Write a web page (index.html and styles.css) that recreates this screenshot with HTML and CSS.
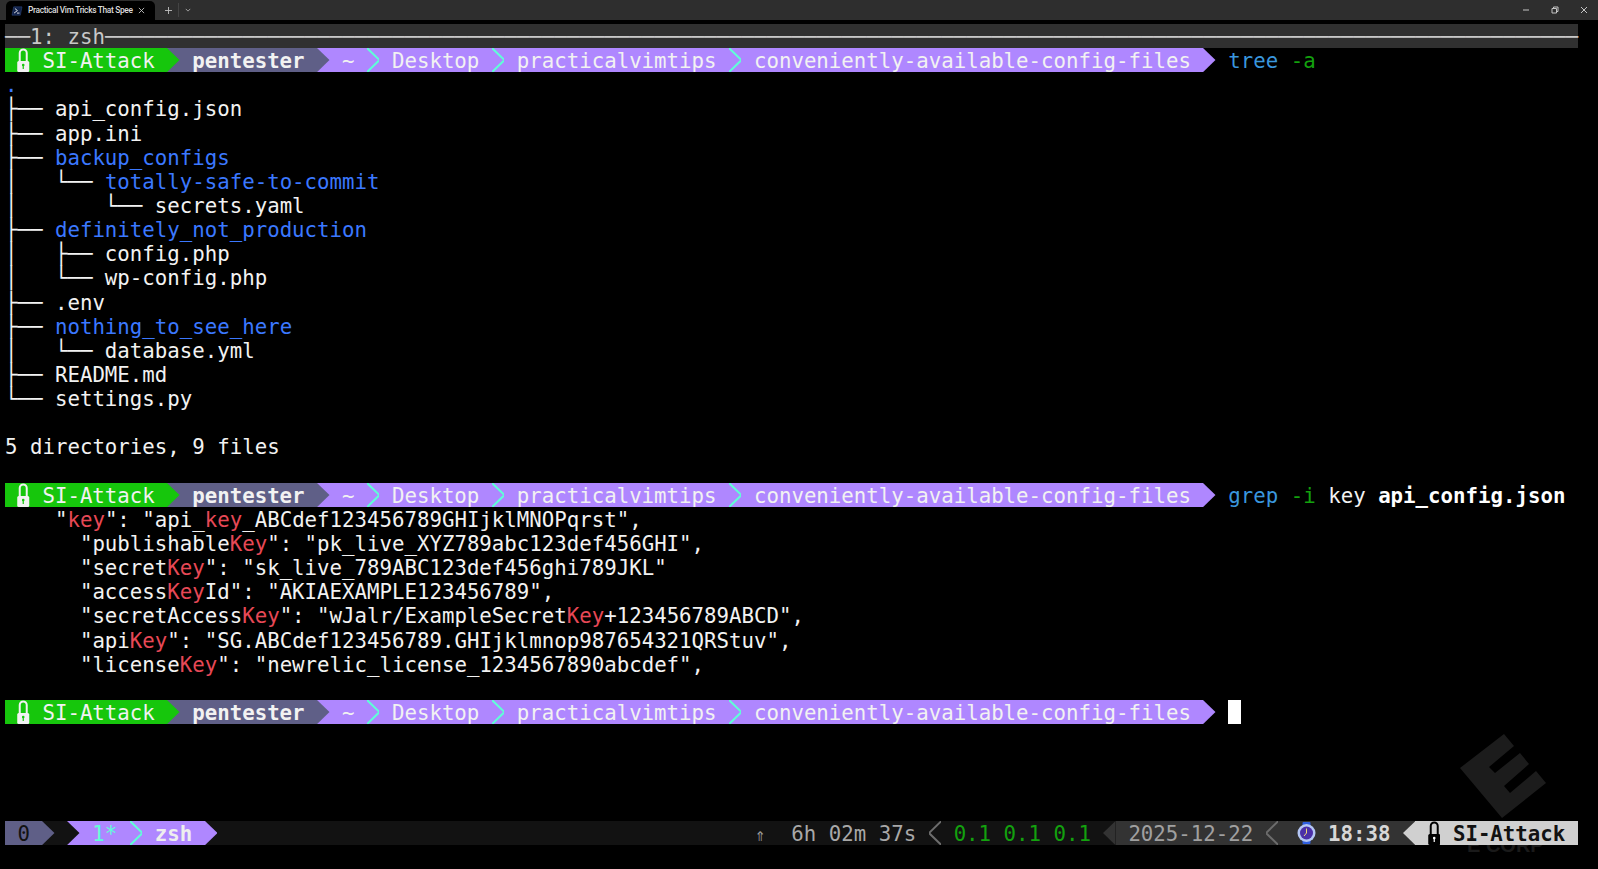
FILE: index.html
```html
<!DOCTYPE html>
<html lang="en">
<head>
<meta charset="utf-8">
<title>Practical Vim Tricks That Spee</title>
<link rel="stylesheet" href="styles.css">
</head>
<body>
<header class="tabbar">
  <div class="tab">
    <svg class="tab-icon" viewBox="0 0 14 12"><path class="ps-bg" d="M3 1h10l-2 10H1z"/><path class="ps-fg" d="M4.500 3l3 2.500-4 3M7 8.500h3"/></svg>
    <span class="tab-title">Practical Vim Tricks That Spee</span>
    <svg class="tab-close" viewBox="0 0 8 8"><path d="M1 1l6 6M7 1L1 7"/></svg>
  </div>
  <svg class="tab-new" viewBox="0 0 8 8"><path d="M4 0v8M0 4h8"/></svg>
  <span class="tab-sep"></span>
  <svg class="tab-menu" viewBox="0 0 8 5"><path d="M1 1l3 3 3-3"/></svg>
  <div class="win-controls">
    <svg class="win-btn" viewBox="0 0 8 8"><path d="M1 4h6"/></svg>
    <svg class="win-btn" viewBox="0 0 8 8"><path d="M1 2.500h4.500V7H1zM2.500 2.500V1H7v4.500H5.500"/></svg>
    <svg class="win-btn" viewBox="0 0 8 8"><path d="M1 1l6 6M7 1L1 7"/></svg>
  </div>
</header>

<svg class="watermark" viewBox="0 0 87 87"><polygon points="44,1 54,13 29,34 35,40 60,20 69,31 44,53 50,60 76,38 86,50 42,85 0,35"/></svg>
<div class="watermark-text">E CORP</div>

<main class="term">
  <div class="row title">──<span>1: zsh</span>──────────────────────────────────────────────────────────────────────────────────────────────────────────────────────</div>

  <div class="row">
    <span class="seg green"> <svg class="lock" viewBox="0 0 12 24"><path class="lock-shackle" d="M2.500 14V5a3.500 3.500 0 0 1 7 0v9"/><rect class="lock-body" y="13" width="12" height="11" rx="1.500"/><circle class="lock-dot" cx="6" cy="17" r="1.300"/><path class="lock-hole" d="M6 17v4"/></svg> SI-Attack </span>
    <svg class="arr on-grey" viewBox="0 0 12 24" preserveAspectRatio="none"><polygon class="f-green" points="0,0 12,12 0,24"/></svg>
    <span class="seg grey strong"> pentester </span>
    <svg class="arr on-purple" viewBox="0 0 12 24" preserveAspectRatio="none"><polygon class="f-grey" points="0,0 12,12 0,24"/></svg>
    <span class="seg purple"> ~ </span>
    <svg class="arr on-purple" viewBox="0 0 12 24" preserveAspectRatio="none"><polyline class="s-cyan" points="0,0 12,12 0,24"/></svg>
    <span class="seg purple"> Desktop </span>
    <svg class="arr on-purple" viewBox="0 0 12 24" preserveAspectRatio="none"><polyline class="s-cyan" points="0,0 12,12 0,24"/></svg>
    <span class="seg purple"> practicalvimtips </span>
    <svg class="arr on-purple" viewBox="0 0 12 24" preserveAspectRatio="none"><polyline class="s-cyan" points="0,0 12,12 0,24"/></svg>
    <span class="seg purple"> conveniently-available-config-files </span>
    <svg class="arr" viewBox="0 0 12 24" preserveAspectRatio="none"><polygon class="f-purple" points="0,0 12,12 0,24"/></svg>
    <span> <span class="cmd">tree</span> <span class="flag">-a</span></span>
  </div>

  <div class="row dir">.</div>
  <div class="row">├── api_config.json</div>
  <div class="row">├── app.ini</div>
  <div class="row">├── <span class="dir">backup_configs</span></div>
  <div class="row">│   └── <span class="dir">totally-safe-to-commit</span></div>
  <div class="row">│       └── secrets.yaml</div>
  <div class="row">├── <span class="dir">definitely_not_production</span></div>
  <div class="row">│   ├── config.php</div>
  <div class="row">│   └── wp-config.php</div>
  <div class="row">├── .env</div>
  <div class="row">├── <span class="dir">nothing_to_see_here</span></div>
  <div class="row">│   └── database.yml</div>
  <div class="row">├── README.md</div>
  <div class="row">└── settings.py</div>
  <div class="row"></div>
  <div class="row">5 directories, 9 files</div>
  <div class="row"></div>

  <div class="row">
    <span class="seg green"> <svg class="lock" viewBox="0 0 12 24"><path class="lock-shackle" d="M2.500 14V5a3.500 3.500 0 0 1 7 0v9"/><rect class="lock-body" y="13" width="12" height="11" rx="1.500"/><circle class="lock-dot" cx="6" cy="17" r="1.300"/><path class="lock-hole" d="M6 17v4"/></svg> SI-Attack </span>
    <svg class="arr on-grey" viewBox="0 0 12 24" preserveAspectRatio="none"><polygon class="f-green" points="0,0 12,12 0,24"/></svg>
    <span class="seg grey strong"> pentester </span>
    <svg class="arr on-purple" viewBox="0 0 12 24" preserveAspectRatio="none"><polygon class="f-grey" points="0,0 12,12 0,24"/></svg>
    <span class="seg purple"> ~ </span>
    <svg class="arr on-purple" viewBox="0 0 12 24" preserveAspectRatio="none"><polyline class="s-cyan" points="0,0 12,12 0,24"/></svg>
    <span class="seg purple"> Desktop </span>
    <svg class="arr on-purple" viewBox="0 0 12 24" preserveAspectRatio="none"><polyline class="s-cyan" points="0,0 12,12 0,24"/></svg>
    <span class="seg purple"> practicalvimtips </span>
    <svg class="arr on-purple" viewBox="0 0 12 24" preserveAspectRatio="none"><polyline class="s-cyan" points="0,0 12,12 0,24"/></svg>
    <span class="seg purple"> conveniently-available-config-files </span>
    <svg class="arr" viewBox="0 0 12 24" preserveAspectRatio="none"><polygon class="f-purple" points="0,0 12,12 0,24"/></svg>
    <span> <span class="cmd">grep</span> <span class="flag">-i</span> key <b class="file">api_config.json</b></span>
  </div>

  <div class="row">    "<span class="hit">key</span>": "api_<span class="hit">key</span>_ABCdef123456789GHIjklMNOPqrst",</div>
  <div class="row">      "publishable<span class="hit">Key</span>": "pk_live_XYZ789abc123def456GHI",</div>
  <div class="row">      "secret<span class="hit">Key</span>": "sk_live_789ABC123def456ghi789JKL"</div>
  <div class="row">      "access<span class="hit">Key</span>Id": "AKIAEXAMPLE123456789",</div>
  <div class="row">      "secretAccess<span class="hit">Key</span>": "wJalr/ExampleSecret<span class="hit">Key</span>+123456789ABCD",</div>
  <div class="row">      "api<span class="hit">Key</span>": "SG.ABCdef123456789.GHIjklmnop987654321QRStuv",</div>
  <div class="row">      "license<span class="hit">Key</span>": "newrelic_license_1234567890abcdef",</div>
  <div class="row"></div>

  <div class="row">
    <span class="seg green"> <svg class="lock" viewBox="0 0 12 24"><path class="lock-shackle" d="M2.500 14V5a3.500 3.500 0 0 1 7 0v9"/><rect class="lock-body" y="13" width="12" height="11" rx="1.500"/><circle class="lock-dot" cx="6" cy="17" r="1.300"/><path class="lock-hole" d="M6 17v4"/></svg> SI-Attack </span>
    <svg class="arr on-grey" viewBox="0 0 12 24" preserveAspectRatio="none"><polygon class="f-green" points="0,0 12,12 0,24"/></svg>
    <span class="seg grey strong"> pentester </span>
    <svg class="arr on-purple" viewBox="0 0 12 24" preserveAspectRatio="none"><polygon class="f-grey" points="0,0 12,12 0,24"/></svg>
    <span class="seg purple"> ~ </span>
    <svg class="arr on-purple" viewBox="0 0 12 24" preserveAspectRatio="none"><polyline class="s-cyan" points="0,0 12,12 0,24"/></svg>
    <span class="seg purple"> Desktop </span>
    <svg class="arr on-purple" viewBox="0 0 12 24" preserveAspectRatio="none"><polyline class="s-cyan" points="0,0 12,12 0,24"/></svg>
    <span class="seg purple"> practicalvimtips </span>
    <svg class="arr on-purple" viewBox="0 0 12 24" preserveAspectRatio="none"><polyline class="s-cyan" points="0,0 12,12 0,24"/></svg>
    <span class="seg purple"> conveniently-available-config-files </span>
    <svg class="arr" viewBox="0 0 12 24" preserveAspectRatio="none"><polygon class="f-purple" points="0,0 12,12 0,24"/></svg>
    <span> </span><span class="cursor"> </span>
  </div>

  <div class="row"></div>
  <div class="row"></div>
  <div class="row"></div>
  <div class="row"></div>

  <div class="row status">
    <span class="seg grey st-zero"> 0 </span>
    <svg class="arr on-dark" viewBox="0 0 12 24" preserveAspectRatio="none"><polygon class="f-grey" points="0,0 12,12 0,24"/></svg>
    <span class="seg"> </span>
    <svg class="arr on-purple" viewBox="0 0 12 24" preserveAspectRatio="none"><polygon class="f-dark" points="0,0 12,12 0,24"/></svg>
    <span class="seg purple st-cur"> 1* </span>
    <svg class="arr on-purple" viewBox="0 0 12 24" preserveAspectRatio="none"><polyline class="s-cyan" points="0,0 12,12 0,24"/></svg>
    <span class="seg purple strong"> zsh </span>
    <svg class="arr on-dark" viewBox="0 0 12 24" preserveAspectRatio="none"><polygon class="f-purple" points="0,0 12,12 0,24"/></svg>
    <span class="st-gap"></span>
    <span class="st-up"><span class="st-up-glyph">⇑</span></span>
    <span class="seg st-uptime">  6h 02m 37s </span>
    <svg class="arr on-dark" viewBox="0 0 12 24" preserveAspectRatio="none"><polyline class="s-grey" points="12,0 0,12 12,24"/></svg>
    <span class="seg st-load"> 0.1 0.1 0.1 </span>
    <svg class="arr on-dark" viewBox="0 0 12 24" preserveAspectRatio="none"><polygon class="f-mid" points="12,0 0,12 12,24"/></svg>
    <span class="seg mid st-date"> 2025-12-22 </span>
    <svg class="arr on-mid" viewBox="0 0 12 24" preserveAspectRatio="none"><polyline class="s-grey" points="12,0 0,12 12,24"/></svg>
    <span class="seg mid st-date"> </span>
    <span class="watch-cell"><svg class="watch" viewBox="0 0 19 24"><rect class="watch-band" x="5.500" y="1" width="8" height="22" rx="1"/><circle class="watch-case" cx="9.500" cy="12" r="9"/><circle class="watch-face" cx="9.500" cy="12" r="6.500"/><path class="watch-hand" d="M9.500 7.500V12L7 15"/></svg></span>
    <span class="seg mid st-time"> 18:38 </span>
    <svg class="arr on-mid" viewBox="0 0 12 24" preserveAspectRatio="none"><polygon class="f-light" points="12,0 0,12 12,24"/></svg>
    <span class="seg light"> <svg class="lock lock-dark" viewBox="0 0 12 24"><path class="lock-shackle" d="M2.500 14V5a3.500 3.500 0 0 1 7 0v9"/><rect class="lock-body" y="13" width="12" height="11" rx="1.500"/><circle class="lock-dot" cx="6" cy="17" r="1.300"/><path class="lock-hole" d="M6 17v4"/></svg> SI-Attack </span>
  </div>
</main>
</body>
</html>
```

FILE: styles.css
```css
* { box-sizing: border-box; }
html, body { margin: 0; height: 100%; }
body {
  background: #000;
  overflow: hidden;
  position: relative;
}

/* window chrome */
.tabbar {
  height: 20px;
  background: #2e2e2e;
  display: flex;
  align-items: center;
  padding-left: 6px;
}
.tab {
  width: 149px;
  height: 19px;
  align-self: flex-end;
  background: #000;
  border-radius: 5px 5px 0 0;
  display: flex;
  align-items: center;
  padding-left: 5px;
}
.tab-icon { width: 12px; height: 10px; flex: none; }
.ps-bg { fill: #12224a; stroke: #35508a; stroke-width: 0.6; }
.ps-fg { fill: none; stroke: #fff; stroke-width: 1; }
.tab-title {
  font: 500 8.4px/1.3 Roboto, sans-serif;
  letter-spacing: -0.33px;
  color: #dcdcdc;
  margin-left: 5px;
  width: 105px;
  white-space: nowrap;
}
.tab-close { width: 7px; height: 7px; margin-left: 5px; }
.tab-new { width: 7px; height: 7px; margin-left: 10px; }
.tab-sep { width: 1px; height: 14px; background: #444; margin-left: 6px; }
.tab-menu { width: 6px; height: 4px; margin-left: 6px; }
.tab-close path, .tab-new path, .tab-menu path, .win-btn path {
  fill: none;
  stroke: #c4c4c4;
  stroke-width: 1;
}
.win-controls {
  margin-left: auto;
  margin-right: 10px;
  display: flex;
  gap: 21px;
}
.win-btn { width: 8px; height: 8px; }

/* terminal */
.term {
  position: relative;
  margin: 4px 20px 0 5px;
  font-family: "DejaVu Sans Mono", monospace;
  font-size: 20.74px;
  color: #f2f2f2;
  z-index: 1;
}
.row {
  display: flex;
  height: 24.15px;
  line-height: 26.15px;
  white-space: pre;
}
.row > * { flex: none; }
.title {
  background: #303030;
  color: #c8c8c8;
}
.seg { display: block; }
.green { background: #16c60c; }
.grey { background: #5f5f87; }
.purple { background: #af87ff; }
.mid { background: #333; }
.light { background: #d0d0d0; color: #121212; font-weight: 700; }
.strong { font-weight: 700; }
.dir { color: #3b78ff; }
.cmd { color: #3a96dd; }
.flag { color: #13a10e; }
.file { font-weight: 700; color: #fff; }
.hit { color: #e74856; }
.cursor { background: #fff; }

/* powerline arrows */
.arr { width: 1ch; height: 100%; display: block; }
.on-grey { background: #5f5f87; }
.on-purple { background: #af87ff; }
.on-dark { background: #121212; }
.on-mid { background: #333; }
.f-green { fill: #16c60c; }
.f-grey { fill: #5f5f87; }
.f-purple { fill: #af87ff; }
.f-dark { fill: #121212; }
.f-mid { fill: #333; }
.f-light { fill: #d0d0d0; }
.s-cyan, .s-grey { fill: none; stroke-width: 2; vector-effect: non-scaling-stroke; }
.s-cyan { stroke: #5fffd7; }
.s-grey { stroke: #6c6c6c; }

/* lock glyph */
.lock {
  display: inline-block;
  width: 1ch;
  height: 24px;
  vertical-align: top;
}
.lock-shackle { fill: none; stroke: #f2f2f2; stroke-width: 2; }
.lock-body { fill: #f2f2f2; }
.lock-dot { fill: #16c60c; }
.lock-hole { stroke: #16c60c; stroke-width: 1.2; }
.lock-dark .lock-shackle { stroke: #000; }
.lock-dark .lock-body { fill: #000; }
.lock-dark .lock-dot { fill: #fff; }
.lock-dark .lock-hole { stroke: #fff; }

/* status line */
.status { background: #121212; color: #9e9e9e; }
.st-zero { color: #121212; }
.st-cur { color: #5fffd7; }
.status .purple.strong { color: #eee; }
.st-gap { width: 43ch; }
.st-up { width: 1ch; text-align: center; }
.st-up-glyph { font-size: 18px; }
.st-uptime { color: #a8a8a8; }
.st-load { color: #13a10e; }
.st-date { color: #a0a0a0; }
.st-time { color: #d7d7d7; font-weight: 700; }
.watch-cell {
  width: 2ch;
  background: #333;
  display: flex;
  justify-content: flex-end;
}
.watch { width: 19px; height: 24px; display: block; }
.watch-band { fill: #2f5fe0; }
.watch-case { fill: #b4c6f4; }
.watch-face { fill: #4b2fa8; }
.watch-hand { fill: none; stroke: #f0d878; stroke-width: 1; }

/* faint logo printed behind the terminal */
.watermark {
  position: absolute;
  left: 1460px;
  top: 733px;
  width: 87px;
  height: 87px;
}
.watermark polygon { fill: #1c1c1c; }
.watermark-text {
  position: absolute;
  left: 1467px;
  top: 835px;
  font: 700 20px/1 "Liberation Sans", sans-serif;
  color: #1a1a1a;
}
```
